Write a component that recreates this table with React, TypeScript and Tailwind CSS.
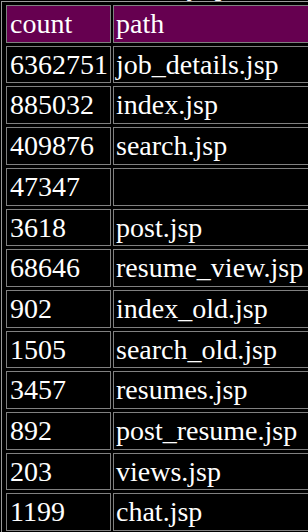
const ROWS: [string, string][] = [
  ['6362751', 'job_details.jsp'],
  ['885032', 'index.jsp'],
  ['409876', 'search.jsp'],
  ['47347', ''],
  ['3618', 'post.jsp'],
  ['68646', 'resume_view.jsp'],
  ['902', 'index_old.jsp'],
  ['1505', 'search_old.jsp'],
  ['3457', 'resumes.jsp'],
  ['892', 'post_resume.jsp'],
  ['203', 'views.jsp'],
  ['1199', 'chat.jsp'],
];

const cell = 'border border-[#808080] py-[2px] leading-[31.7px] text-left font-normal whitespace-nowrap';

export default function App() {
  return (
    <div className="w-[308px] h-[532px] overflow-hidden bg-black text-white text-[28px] font-['Liberation_Serif','Times_New_Roman',serif]">
      {/* caption scrolled mostly out of view, only its descenders peek in */}
      <div className="-mt-[30px] h-[30px] leading-[31px] pl-[118px] whitespace-nowrap">hits_by_path</div>
      <table className="ml-[1px] mt-[1px] w-[330px] table-fixed border-separate border-spacing-x-[2px] border-spacing-y-[3px] border border-[#9a9a9a] pl-[2px]">
        <thead>
          <tr>
            <th className={`${cell} w-[105px] pl-[3px] pr-[2px] bg-[#660050]`}>count</th>
            <th className={`${cell} px-[2px] bg-[#660050]`}>path</th>
          </tr>
        </thead>
        <tbody>
          {ROWS.map(([count, path]) => (
            <tr key={count}>
              <td className={`${cell} pl-[3px] pr-[2px]`}>{count}</td>
              <td className={`${cell} px-[2px]`}>{path}</td>
            </tr>
          ))}
        </tbody>
      </table>
    </div>
  );
}
